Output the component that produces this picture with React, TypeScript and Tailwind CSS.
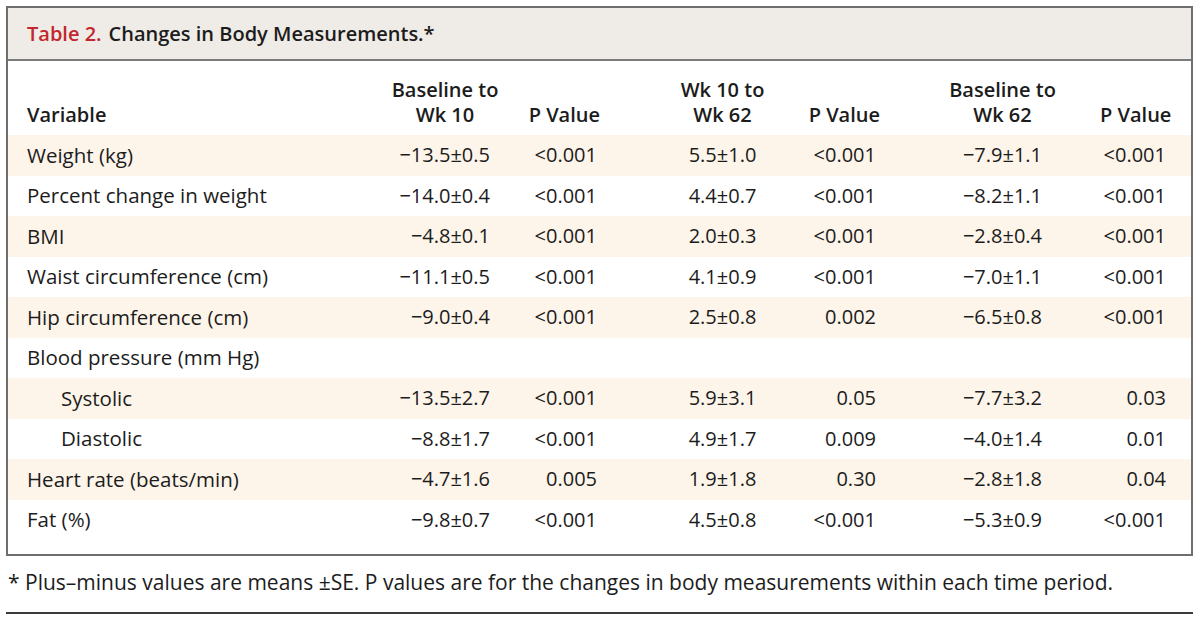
type Row = {
  label: string;
  indent?: boolean;
  cells: string[];
};

const rows: Row[] = [
  { label: "Weight (kg)", cells: ["−13.5±0.5", "<0.001", "5.5±1.0", "<0.001", "−7.9±1.1", "<0.001"] },
  { label: "Percent change in weight", cells: ["−14.0±0.4", "<0.001", "4.4±0.7", "<0.001", "−8.2±1.1", "<0.001"] },
  { label: "BMI", cells: ["−4.8±0.1", "<0.001", "2.0±0.3", "<0.001", "−2.8±0.4", "<0.001"] },
  { label: "Waist circumference (cm)", cells: ["−11.1±0.5", "<0.001", "4.1±0.9", "<0.001", "−7.0±1.1", "<0.001"] },
  { label: "Hip circumference (cm)", cells: ["−9.0±0.4", "<0.001", "2.5±0.8", "0.002", "−6.5±0.8", "<0.001"] },
  { label: "Blood pressure (mm Hg)", cells: ["", "", "", "", "", ""] },
  { label: "Systolic", indent: true, cells: ["−13.5±2.7", "<0.001", "5.9±3.1", "0.05", "−7.7±3.2", "0.03"] },
  { label: "Diastolic", indent: true, cells: ["−8.8±1.7", "<0.001", "4.9±1.7", "0.009", "−4.0±1.4", "0.01"] },
  { label: "Heart rate (beats/min)", cells: ["−4.7±1.6", "0.005", "1.9±1.8", "0.30", "−2.8±1.8", "0.04"] },
  { label: "Fat (%)", cells: ["−9.8±0.7", "<0.001", "4.5±0.8", "<0.001", "−5.3±0.9", "<0.001"] },
];

// value cell alignment per column (after the label column)
const cellClass = [
  "text-right pr-[20px]",
  "text-right pr-[43px]",
  "text-center",
  "text-right pr-[29px]",
  "text-center",
  "text-right pr-[25px]",
];

const grid = "grid grid-cols-[372px_130px_130px_165px_100px_195px_91px]";

export default function App() {
  return (
    <div
      className="w-[1200px] h-[620px] bg-white pl-[6px] pt-[6px] text-[#1c1c1c]"
      style={{ fontFamily: '"Open Sans", "Noto Sans", sans-serif' }}
    >
      <div className="w-[1187px] border-2 border-[#6e6e6e]">
        <div className="h-[53px] flex items-center pl-[19px] bg-[#efebe6] border-b-2 border-[#7a7a7a] text-[20px] font-semibold">
          <span className="text-[#c1272d]">Table 2.</span>
          <span className="ml-[7px]">Changes in Body Measurements.*</span>
        </div>

        <div className={`${grid} h-[74px] items-end pb-[8px] text-[20px] font-semibold leading-[25px] whitespace-nowrap`}>
          <div className="pl-[19px]">Variable</div>
          <div className="text-center">
            Baseline to
            <br />
            Wk 10
          </div>
          <div className="text-right pr-[40px]">P Value</div>
          <div className="text-center">
            Wk 10 to
            <br />
            Wk 62
          </div>
          <div className="text-right pr-[25px]">P Value</div>
          <div className="text-center">
            Baseline to
            <br />
            Wk 62
          </div>
          <div className="text-right pr-[21px]">P Value</div>
        </div>

        <div className="pb-[14px]">
          {rows.map((r, i) => (
            <div
              key={r.label}
              className={`${grid} h-[40.5px] items-center text-[20px] whitespace-nowrap ${
                i % 2 === 0 ? "bg-[#fdf5ea]" : "bg-white"
              }`}
            >
              <div className={`text-[20.5px] ${r.indent ? "pl-[53px]" : "pl-[19px]"}`}>{r.label}</div>
              {r.cells.map((c, j) => (
                <div key={j} className={cellClass[j]}>
                  {c}
                </div>
              ))}
            </div>
          ))}
        </div>
      </div>

      <p className="mt-[13px] pl-[2px] text-[21px] leading-[26px] whitespace-nowrap">
        * Plus–minus values are means ±SE. P values are for the changes in body measurements within each time period.
      </p>
      <div className="mt-[17px] w-[1187px] h-[2px] bg-[#3a3a3a]" />
    </div>
  );
}
